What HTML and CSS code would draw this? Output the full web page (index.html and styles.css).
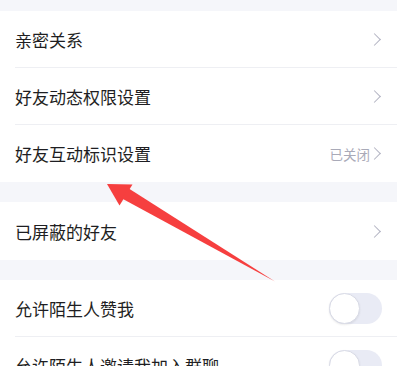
FILE: index.html
```html
<!DOCTYPE html>
<html lang="zh-CN">
<head>
<meta charset="utf-8">
<link rel="stylesheet" href="styles.css">
</head>
<body>
<div class="page">
  <div class="section">
    <div class="row"><span class="label">亲密关系</span><span class="right"><span class="chev"></span></span></div>
    <div class="row"><span class="label">好友动态权限设置</span><span class="right"><span class="chev"></span></span></div>
    <div class="row last"><span class="label">好友互动标识设置</span><span class="right"><span class="value">已关闭</span><span class="chev"></span></span></div>
  </div>
  <div class="section">
    <div class="row last tall"><span class="label">已屏蔽的好友</span><span class="right"><span class="chev"></span></span></div>
  </div>
  <div class="section">
    <div class="row"><span class="label">允许陌生人赞我</span><span class="toggle"><span class="knob"></span></span></div>
    <div class="row"><span class="label">允许陌生人邀请我加入群聊</span><span class="toggle"><span class="knob"></span></span></div>
  </div>
  <svg class="arrow" width="397" height="366" viewBox="0 0 397 366">
    <polygon points="107,184 132.5,184.5 119.5,205.5" fill="#f63f3f"/>
    <polygon points="128,188 122,198.5 275,281.5" fill="#f63f3f"/>
  </svg>
</div>
</body>
</html>
```
FILE: styles.css
```css
html, body {
  margin: 0;
  padding: 0;
  background: #f5f6fa;
}
body {
  font-family: "Noto Sans CJK SC", "Noto Sans", sans-serif;
  width: 397px;
  height: 366px;
  overflow: hidden;
}
.page {
  position: relative;
  padding-top: 11px;
  display: flex;
  flex-direction: column;
  gap: 20px;
}
.section {
  background: #ffffff;
  padding-left: 15px;
}
.row {
  height: 57px;
  box-sizing: border-box;
  border-bottom: 1px solid #eeeff3;
  display: flex;
  align-items: center;
  justify-content: space-between;
  padding-right: 15px;
}
.row.tall {
  height: 58px;
}
.row.last {
  border-bottom: none;
}
.label {
  font-size: 17px;
  color: #1e1e22;
}
.right {
  display: flex;
  align-items: center;
  gap: 0;
}
.value {
  font-size: 13.5px;
  color: #a9aab8;
}
.chev {
  width: 8px;
  height: 8px;
  border-top: 1.5px solid #b2b3c2;
  border-right: 1.5px solid #b2b3c2;
  transform: rotate(45deg);
  margin-right: 3px;
}
.toggle {
  width: 53px;
  height: 31px;
  border-radius: 16px;
  background: #e9ebf5;
  position: relative;
}
.knob {
  position: absolute;
  left: 0;
  top: 0;
  width: 29px;
  height: 29px;
  border-radius: 50%;
  background: #ffffff;
  border: 1px solid #d9dbe6;
  box-shadow: 0 1px 2px rgba(0, 0, 0, 0.08);
}
.arrow {
  position: absolute;
  left: 0;
  top: 0;
  pointer-events: none;
}
```
